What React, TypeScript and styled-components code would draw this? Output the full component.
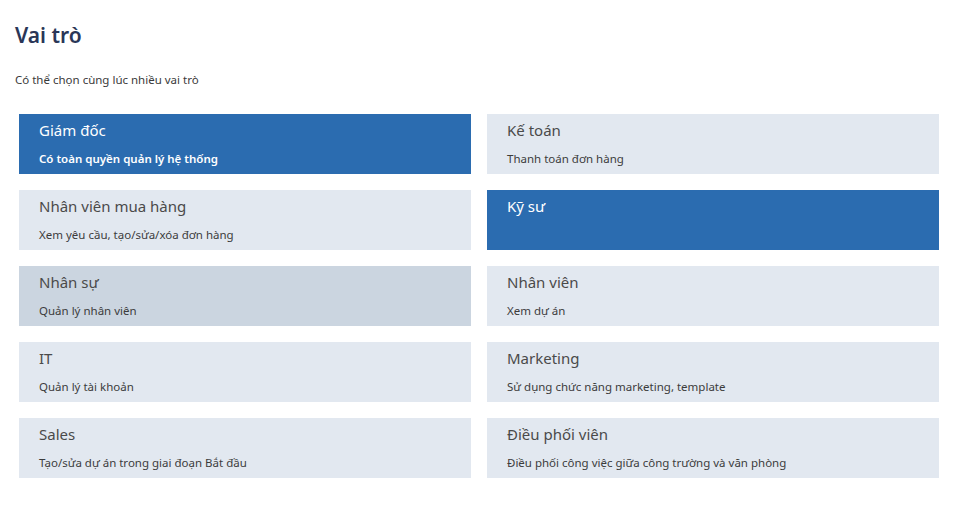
import React, { useState } from "react";
import styled, { createGlobalStyle } from "styled-components";

const Global = createGlobalStyle`
  html, body { margin: 0; padding: 0; background: #fff; }
  body { font-family: "Noto Sans", "Open Sans", sans-serif; }
`;

const Page = styled.div`
  padding: 20px 24px 0 15px;
`;

const Title = styled.h1`
  margin: 0;
  font-size: 21px;
  line-height: 30px;
  font-weight: 600;
  color: #2a3657;
`;

const Subtitle = styled.p`
  margin: 22px 0 0 0;
  font-size: 11.5px;
  line-height: 16px;
  color: #3a3a3a;
`;

const Grid = styled.div`
  display: grid;
  grid-template-columns: 452px 452px;
  column-gap: 16px;
  row-gap: 16px;
  margin: 26px 0 0 4px;
`;

const Card = styled.button<{ $selected?: boolean; $hover?: boolean }>`
  all: unset;
  box-sizing: border-box;
  height: 60px;
  padding: 6px 20px 0 20px;
  display: flex;
  flex-direction: column;
  cursor: pointer;
  background: ${(p) => (p.$selected ? "#2b6cb0" : p.$hover ? "#cbd5e0" : "#e2e8f0")};
  color: ${(p) => (p.$selected ? "#ffffff" : "#4a4a4a")};
`;

const CardTitle = styled.div`
  font-size: 15px;
  line-height: 20px;
`;

const CardDesc = styled.div<{ $selected?: boolean }>`
  margin-top: 11px;
  font-size: 11.5px;
  line-height: 16px;
  font-weight: ${(p) => (p.$selected ? 600 : 400)};
  color: ${(p) => (p.$selected ? "#ffffff" : "#3c3c3c")};
`;

const roles = [
  { t: "Giám đốc", d: "Có toàn quyền quản lý hệ thống" },
  { t: "Kế toán", d: "Thanh toán đơn hàng" },
  { t: "Nhân viên mua hàng", d: "Xem yêu cầu, tạo/sửa/xóa đơn hàng" },
  { t: "Kỹ sư", d: "" },
  { t: "Nhân sự", d: "Quản lý nhân viên" },
  { t: "Nhân viên", d: "Xem dự án" },
  { t: "IT", d: "Quản lý tài khoản" },
  { t: "Marketing", d: "Sử dụng chức năng marketing, template" },
  { t: "Sales", d: "Tạo/sửa dự án trong giai đoạn Bắt đầu" },
  { t: "Điều phối viên", d: "Điều phối công việc giữa công trường và văn phòng" },
];

export default function App() {
  const [sel, setSel] = useState<string[]>(["Giám đốc", "Kỹ sư"]);
  const toggle = (t: string) =>
    setSel((s) => (s.includes(t) ? s.filter((x) => x !== t) : [...s, t]));
  return (
    <>
      <Global />
      <Page>
        <Title>Vai trò</Title>
        <Subtitle>Có thể chọn cùng lúc nhiều vai trò</Subtitle>
        <Grid>
          {roles.map((r) => {
            const s = sel.includes(r.t);
            return (
              <Card key={r.t} $selected={s} $hover={r.t === "Nhân sự"} onClick={() => toggle(r.t)}>
                <CardTitle>{r.t}</CardTitle>
                {r.d && <CardDesc $selected={s}>{r.d}</CardDesc>}
              </Card>
            );
          })}
        </Grid>
      </Page>
    </>
  );
}
